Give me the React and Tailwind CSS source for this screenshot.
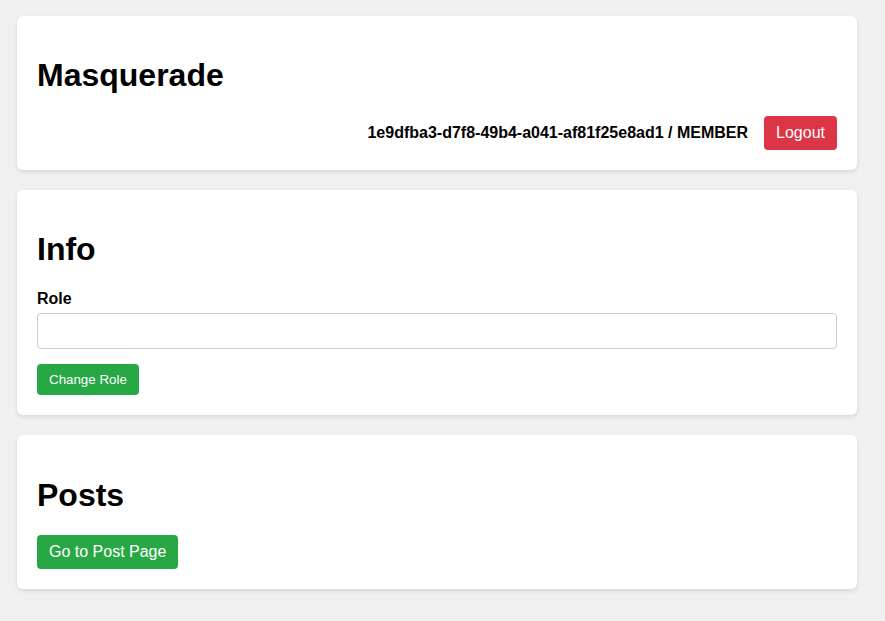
export default function App() {
  return (
    <div className="min-h-screen bg-[#f0f0f0] pl-[17px] pr-[28px] pt-[16px] pb-[20px] text-black" style={{ fontFamily: '"Liberation Sans", Arial, sans-serif' }}>
      <div className="flex w-[840px] flex-col gap-[20px]">
        <div className="rounded-[6px] bg-white p-[20px] shadow-[0_2px_4px_rgba(0,0,0,0.1)]">
          <h1 className="my-[21.44px] text-[32px] font-bold leading-[36.8px]">Masquerade</h1>
          <div className="flex items-center justify-end gap-[16px]">
            <span className="text-[16px] font-bold leading-[18px]">1e9dfba3-d7f8-49b4-a041-af81f25e8ad1 / MEMBER</span>
            <button className="h-[34px] rounded-[4px] bg-[#dc3545] px-[12px] text-[16px] leading-[18px] text-white">Logout</button>
          </div>
        </div>

        <div className="rounded-[6px] bg-white p-[20px] shadow-[0_2px_4px_rgba(0,0,0,0.1)]">
          <h2 className="my-[21.44px] text-[32px] font-bold leading-[36.8px]">Info</h2>
          <label className="mb-[5px] block pt-[1px] text-[16px] font-bold leading-[18px]">Role</label>
          <input className="block h-[36px] w-full rounded-[4px] border border-[#cccccc] px-[8px] text-[16px] outline-none" />
          <button className="mt-[15px] h-[31px] rounded-[4px] bg-[#28a745] px-[12px] text-[13.333px] leading-[15px] text-white">Change Role</button>
        </div>

        <div className="rounded-[6px] bg-white p-[20px] shadow-[0_2px_4px_rgba(0,0,0,0.1)]">
          <h2 className="my-[21.44px] text-[32px] font-bold leading-[36.8px]">Posts</h2>
          <button className="h-[34px] rounded-[4px] bg-[#28a745] px-[12px] text-[16px] leading-[18px] text-white">Go to Post Page</button>
        </div>
      </div>
    </div>
  );
}
